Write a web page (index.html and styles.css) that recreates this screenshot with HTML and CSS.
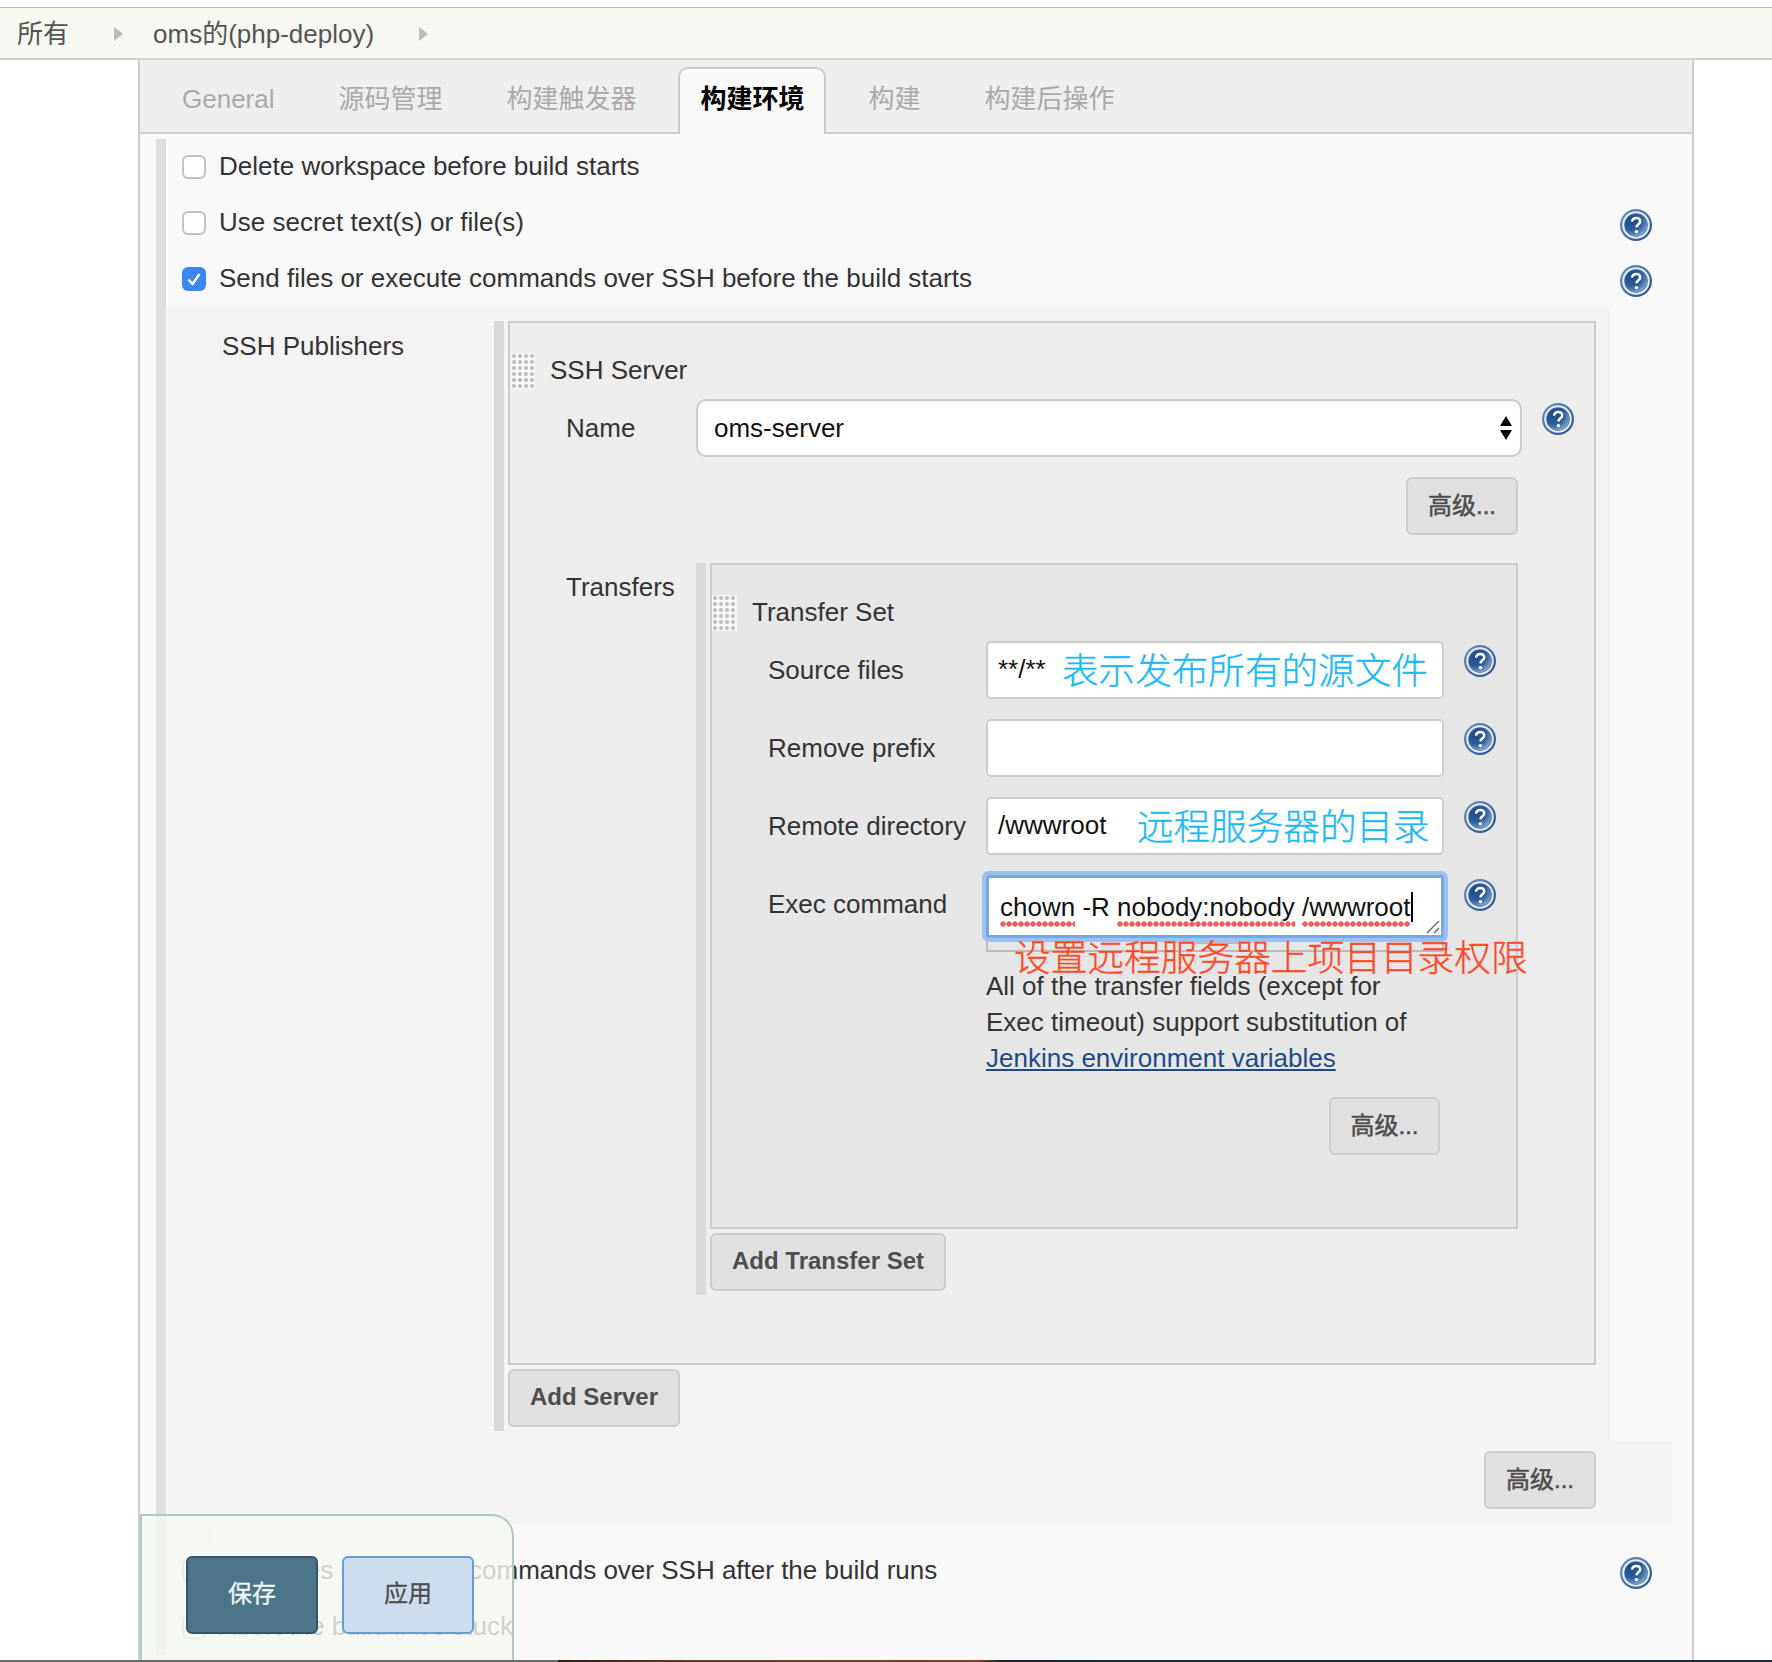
FILE: index.html
```html
<!DOCTYPE html>
<html>
  <head>
    <title>oms的(php-deploy) Config</title>
    <meta charset="utf-8">
    <link rel="stylesheet" href="styles.css">
  </head>
  <body>
    <svg class="icon-defs" width="0" height="0">
      <defs>
        <radialGradient id="help-fill" cx="32%" cy="28%" r="90%">
          <stop offset="0" stop-color="#1f4a86"/>
          <stop offset="0.5" stop-color="#2b5c9b"/>
          <stop offset="1" stop-color="#a6c2de"/>
        </radialGradient>
        <linearGradient id="help-edge" x1="0" y1="0" x2="1" y2="1">
          <stop offset="0" stop-color="#6f92bf"/>
          <stop offset="1" stop-color="#234f8c"/>
        </linearGradient>
        <symbol id="help" viewBox="0 0 32 32">
          <circle cx="16" cy="16" r="16" fill="url(#help-edge)"/>
          <circle cx="16" cy="16" r="12.8" fill="none" stroke="#e6edf5" stroke-width="2"/>
          <circle cx="16" cy="16" r="11.2" fill="url(#help-fill)"/>
          <path d="M12 12.6c.3-2.4 2-3.7 4.2-3.7 2.3 0 4 1.4 4 3.5 0 2.8-3.6 3-3.8 6" fill="none" stroke="#fff" stroke-width="2.5"/>
          <circle cx="16.4" cy="22.6" r="1.7" fill="#fff"/>
        </symbol>
      </defs>
    </svg>

    <nav class="breadcrumbs">
      <a class="crumb" href="#">所有</a>
      <span class="crumb-arrow"></span>
      <a class="crumb" href="#">oms的(php-deploy)</a>
      <span class="crumb-arrow"></span>
    </nav>

    <div class="main">
      <div class="tabs">
        <a class="tab" href="#">General</a>
        <a class="tab" href="#">源码管理</a>
        <a class="tab" href="#">构建触发器</a>
        <a class="tab active" href="#">构建环境</a>
        <a class="tab" href="#">构建</a>
        <a class="tab" href="#">构建后操作</a>
      </div>

      <div class="section">
        <div class="check-row">
          <span class="check"></span>
          <span class="check-text">Delete workspace before build starts</span>
        </div>
        <div class="check-row">
          <span class="check"></span>
          <span class="check-text">Use secret text(s) or file(s)</span>
          <svg class="help help-right"><use href="#help"/></svg>
        </div>
        <div class="check-row">
          <span class="check checked">
            <svg viewBox="0 0 24 24"><path d="M6.5 12.5l4 4.5 7-10" fill="none" stroke="#fff" stroke-width="2.4"/></svg>
          </span>
          <span class="check-text">Send files or execute commands over SSH before the build starts</span>
          <svg class="help help-right"><use href="#help"/></svg>
        </div>

        <div class="publishers">
          <div class="publishers-label">SSH Publishers</div>
          <div class="repeat">
            <div class="server-box">
              <div class="repeat-head">
                <span class="grip"></span>
                <span class="repeat-title">SSH Server</span>
              </div>
              <div class="name-row">
                <label class="name-label">Name</label>
                <div class="select">
                  <span>oms-server</span>
                  <svg class="select-arrows" viewBox="0 0 12 24"><path d="M6 0l6 10H0zM0 14h12l-6 10z" fill="#000"/></svg>
                </div>
                <svg class="help"><use href="#help"/></svg>
              </div>
              <div class="btn-line server-adv">
                <button class="btn btn-cjk" type="button">高级...</button>
              </div>

              <div class="transfers">
                <label class="transfers-label">Transfers</label>
                <div class="repeat">
                  <div class="transfer-box">
                    <div class="repeat-head">
                      <span class="grip grip-small"></span>
                      <span class="repeat-title">Transfer Set</span>
                    </div>
                    <div class="field-row">
                      <label class="field-label">Source files</label>
                      <div class="field">
                        <span>**/**</span>
                        <span class="note-blue note-source">表示发布所有的源文件</span>
                      </div>
                      <svg class="help"><use href="#help"/></svg>
                    </div>
                    <div class="field-row">
                      <label class="field-label">Remove prefix</label>
                      <div class="field"></div>
                      <svg class="help"><use href="#help"/></svg>
                    </div>
                    <div class="field-row">
                      <label class="field-label">Remote directory</label>
                      <div class="field">
                        <span>/wwwroot</span>
                        <span class="note-blue note-remote">远程服务器的目录</span>
                      </div>
                      <svg class="help"><use href="#help"/></svg>
                    </div>
                    <div class="field-row">
                      <label class="field-label">Exec command</label>
                      <div class="exec-wrap">
                        <div class="exec">
                          <span class="typo">chown</span> -R <span class="typo">nobody:nobody</span> <span class="typo">/wwwroot</span><span class="caret"></span>
                          <svg class="resize" viewBox="0 0 14 14"><path d="M1 13L13 1M8 13l5-5" fill="none" stroke="#666" stroke-width="1.4"/></svg>
                        </div>
                        <div class="exec-under"><span></span></div>
                        <span class="note-red">设置远程服务器上项目目录权限</span>
                      </div>
                      <svg class="help"><use href="#help"/></svg>
                    </div>
                    <p class="transfer-note">All of the transfer fields (except for<br>Exec timeout) support substitution of<br><a href="#">Jenkins environment variables</a></p>
                    <div class="btn-line transfer-adv">
                      <button class="btn btn-cjk" type="button">高级...</button>
                    </div>
                  </div>
                  <button class="btn btn-add-set" type="button">Add Transfer Set</button>
                </div>
              </div>
            </div>
            <button class="btn btn-add-server" type="button">Add Server</button>
          </div>
        </div>

        <div class="section-adv">
          <button class="btn btn-cjk" type="button">高级...</button>
        </div>
        <div class="spacer-block"></div>

        <div class="check-row">
          <span class="check"></span>
          <span class="check-text">Send files or execute commands over SSH after the build runs</span>
          <svg class="help help-right"><use href="#help"/></svg>
        </div>
        <div class="check-row">
          <span class="check"></span>
          <span class="check-text">Abort the build if it's stuck</span>
        </div>
      </div>

      <div class="bottom-sticker">
        <button class="btn-save" type="button">保存</button>
        <button class="btn-apply" type="button">应用</button>
      </div>
    </div>

    <div class="desktop-strip"></div>
  </body>
</html>
```

FILE: styles.css
```css
/* page */
* {
  box-sizing: border-box;
}

html,
body {
  margin: 0;
  height: 1662px;
  overflow: hidden;
  background-color: #fff;
}

body {
  padding-top: 7px;
  font-family: "Liberation Sans", "Noto Sans CJK SC", sans-serif;
  font-size: 26px;
  color: #333;
}

a {
  color: inherit;
  text-decoration: none;
}

.icon-defs {
  position: absolute;
}

/* breadcrumb bar */
.breadcrumbs {
  display: flex;
  align-items: center;
  height: 53px;
  padding: 0 0 4px 17px;
  border-top: 1px solid #bbb;
  border-bottom: 2px solid #d0d0d0;
  background-color: #f6f8f1;
  color: #555;
}

.crumb-arrow {
  width: 0;
  height: 0;
  margin: 6px 30px 0 45px;
  border-left: 9px solid #bbb;
  border-top: 7px solid transparent;
  border-bottom: 7px solid transparent;
}

/* main panel */
.main {
  position: relative;
  width: 1556px;
  height: 1600px;
  margin-left: 138px;
  overflow: hidden;
  border-left: 2px solid #ccc;
  border-right: 2px solid #ccc;
  background-color: #f9f9f9;
}

.tabs {
  display: flex;
  align-items: flex-end;
  gap: 20px;
  height: 74px;
  padding-left: 20px;
  border-bottom: 2px solid #ccc;
  background-color: #eee;
}

.tab {
  height: 38px;
  margin-bottom: 14px;
  padding: 0 22px;
  line-height: 38px;
  color: #aaa;
}

.tab.active {
  height: 67px;
  margin: 0 1px -2px -1px;
  padding: 11px 19px 0 21px;
  border: 2px solid #ccc;
  border-bottom: none;
  border-radius: 10px 10px 0 0;
  background-color: #f9f9f9;
  color: #000;
  font-weight: bold;
}

.section {
  margin: 5px 0 0 16px;
  border-left: 10px solid rgba(0, 0, 0, 0.1);
}

/* checkbox rows */
.check-row {
  display: flex;
  align-items: center;
  height: 56px;
  padding-left: 16px;
}

.check {
  flex: none;
  width: 24px;
  height: 24px;
  margin-right: 13px;
  border: 2px solid #c2c2c2;
  border-radius: 6px;
  background-color: #fff;
}

.check.checked {
  border: none;
  background-color: #3b87f5;
}

.check svg {
  display: block;
}

.check-text {
  margin-bottom: 2px;
  white-space: nowrap;
}

.help {
  flex: none;
  width: 32px;
  height: 32px;
}

.help-right {
  margin-left: auto;
  margin-right: 40px;
  margin-top: 4px;
}

/* ssh publishers */
.publishers {
  display: flex;
  width: 1444px;
  padding: 14px 0 10px;
  background-color: #f3f3f3;
}

.publishers-label {
  flex: none;
  width: 328px;
  padding-left: 56px;
  line-height: 50px;
}

.repeat {
  border-left: 10px solid #d9d9d9;
  padding-left: 4px;
}

.server-box {
  width: 1088px;
  height: 1044px;
  padding-top: 30px;
  border: 2px solid #ccc;
  background-color: #ededed;
}

.repeat-head {
  display: flex;
  align-items: center;
  gap: 15px;
  height: 36px;
}

.repeat-title {
  margin-bottom: 2px;
}

.grip {
  width: 24px;
  height: 36px;
  margin-left: 1px;
  background: radial-gradient(circle, #bcbcbc 1.4px, #f7f7f7 2.6px) 0 0 / 6px 6px;
}

.grip-small {
  width: 25px;
  margin-left: 0;
}

.name-row {
  display: flex;
  margin: 10px 0 0 56px;
}

.name-label {
  width: 130px;
  line-height: 58px;
}

.select {
  display: flex;
  align-items: center;
  justify-content: space-between;
  width: 826px;
  height: 58px;
  margin-right: 20px;
  padding: 0 8px 0 16px;
  border: 2px solid #ccc;
  border-radius: 10px;
  background-color: #fff;
  box-shadow: inset 0 2px 3px rgba(0, 0, 0, 0.05);
  color: #111;
}

.select-arrows {
  width: 12px;
  height: 24px;
}

.name-row .help,
.field-row .help {
  margin-top: 4px;
}

.btn-line {
  display: flex;
  justify-content: flex-end;
}

.server-adv {
  margin: 20px 76px 0 0;
}

.btn {
  height: 58px;
  width: 112px;
  padding: 0 0 2px;
  border: 2px solid #ccc;
  border-radius: 6px;
  background-color: #e0e0e0;
  color: #4d4d4d;
  font-family: inherit;
  font-size: 24px;
  font-weight: bold;
}

.btn-cjk {
  padding-bottom: 6px;
  font-weight: normal;
  -webkit-text-stroke: 0.5px #4d4d4d;
}

/* transfers */
.transfers {
  display: flex;
  margin: 28px 0 0 56px;
}

.transfers-label {
  flex: none;
  width: 130px;
  padding-top: 6px;
  line-height: 36px;
}

.transfer-box {
  width: 808px;
  height: 666px;
  padding-top: 30px;
  border: 2px solid #ccc;
  background-color: #e6e6e6;
}

.field-row {
  display: flex;
  height: 78px;
  margin-left: 56px;
}

.repeat-head + .field-row {
  margin-top: 10px;
}

.field-label {
  flex: none;
  width: 218px;
  line-height: 58px;
  white-space: nowrap;
}

.field {
  position: relative;
  width: 458px;
  height: 58px;
  margin-right: 20px;
  padding-left: 10px;
  border: 2px solid #ccc;
  border-radius: 5px;
  background-color: #fff;
  color: #111;
  line-height: 52px;
}

/* hand-written remarks on top of the screenshot */
.note-blue,
.note-red {
  position: absolute;
  font-size: 36.6px;
  font-weight: 300;
  line-height: 50px;
  white-space: nowrap;
  -webkit-text-stroke: 0.35px currentColor;
}

.note-blue {
  top: 4px;
  color: #1fb9f5;
}

.note-source {
  left: 74px;
}

.note-remote {
  left: 149px;
}

.exec-wrap {
  position: relative;
  width: 458px;
  height: 58px;
  margin-right: 20px;
}

.exec {
  position: relative;
  height: 63px;
  padding-left: 11px;
  border: 3px solid #76a7e8;
  border-radius: 3px;
  background-color: #fff;
  box-shadow: 0 0 0 4px #9cc0f0;
  color: #111;
  line-height: 58px;
  white-space: nowrap;
}

.typo {
  padding-bottom: 5px;
  background: radial-gradient(circle, #f45c5c 2.4px, transparent 3px) 0 100% / 6px 6px repeat-x;
}

.caret {
  display: inline-block;
  width: 2px;
  height: 30px;
  margin-left: 1px;
  vertical-align: -6px;
  background-color: #000;
}

.resize {
  position: absolute;
  right: 1px;
  bottom: 1px;
  width: 14px;
  height: 14px;
}

.exec-under {
  height: 12px;
  border: 2px solid #bbb;
  border-top: none;
}

.exec-under span {
  display: block;
  width: 54px;
  height: 4px;
  margin: 2px 0 0 200px;
  background-color: #bbb;
}

.note-red {
  top: 59px;
  left: 28px;
  font-size: 36.7px;
  color: #fc4a26;
}

.transfer-note {
  margin: 15px 0 0 274px;
  line-height: 36px;
}

.transfer-note a {
  color: #204a87;
  text-decoration: underline;
}

.transfer-adv {
  margin: 21px 76px 0 0;
}

.transfer-adv .btn {
  width: 111px;
}

.btn-add-set {
  display: block;
  width: 236px;
  margin: 4px 0 4px;
}

.btn-add-server {
  display: block;
  width: 172px;
  margin: 4px 0 4px;
}

.section-adv {
  display: flex;
  justify-content: flex-end;
  width: 1506px;
  height: 82px;
  padding: 10px 76px 0 0;
  background-color: #f3f3f3;
}

.spacer-block {
  width: 46px;
  height: 20px;
  background-color: #f3f3f3;
}

/* save / apply bar */
.bottom-sticker {
  position: absolute;
  left: 0;
  bottom: 0;
  display: flex;
  gap: 24px;
  width: 374px;
  height: 146px;
  padding: 40px 0 0 44px;
  border: 2px solid #aecbb8;
  border-bottom: none;
  border-radius: 0 22px 0 0;
  background-color: rgba(245, 248, 241, 0.8);
}

.btn-save,
.btn-apply {
  width: 132px;
  height: 78px;
  padding: 0 0 8px;
  border-radius: 6px;
  font-family: inherit;
  font-size: 24px;
}

.btn-save {
  border: 2px solid #345668;
  background-color: #4b7688;
  color: #f4f6f7;
  -webkit-text-stroke: 0.3px #f4f6f7;
}

.btn-apply {
  border: 2px solid #6a9bd0;
  background-color: #cdddee;
  color: #4d4d4d;
  -webkit-text-stroke: 0.3px #4d4d4d;
}

/* whatever sits under the browser window */
.desktop-strip {
  height: 2px;
  background: linear-gradient(90deg, #6b6b6b 0, #6b6b6b 558px, #2b1d18 558px, #6d3a22 700px, #7a4226 980px, #1b2430 1000px, #1d2838 1772px);
}
```
